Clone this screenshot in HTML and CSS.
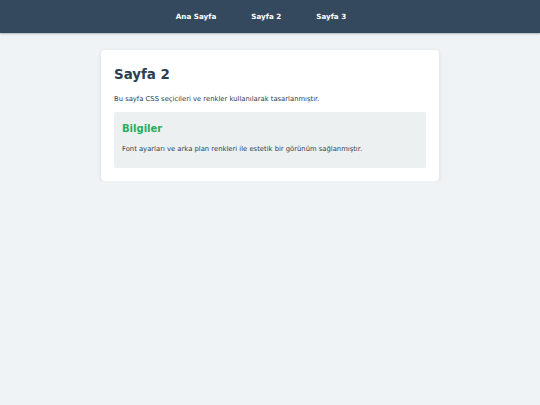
FILE: index.html
```
<!DOCTYPE html>
<html lang="tr">
<head>
<meta charset="utf-8">
<title>Sayfa 2</title>
<link rel="stylesheet" href="styles.css">
</head>
<body>
<nav class="topnav">
  <a class="navlink" href="#">Ana Sayfa</a>
  <a class="navlink" href="#">Sayfa 2</a>
  <a class="navlink" href="#">Sayfa 3</a>
</nav>
<main class="container">
  <h1 class="title">Sayfa 2</h1>
  <p class="text">Bu sayfa CSS seçicileri ve renkler kullanılarak tasarlanmıştır.</p>
  <section class="info">
    <h2 class="info-title">Bilgiler</h2>
    <p class="text">Font ayarları ve arka plan renkleri ile estetik bir görünüm sağlanmıştır.</p>
  </section>
</main>
</body>
</html>
```
FILE: styles.css
```
html, body {
  margin: 0;
  padding: 0;
}
body {
  background: #f0f3f6;
  font-family: "DejaVu Sans", Verdana, sans-serif;
  color: #2c3e50;
  font-size: 6.8px;
}
.topnav {
  background: #34495e;
  height: 33px;
  display: flex;
  justify-content: center;
  align-items: center;
  gap: 35px;
  box-shadow: 0 1px 1.5px rgba(44, 62, 80, 0.35);
  padding-right: 18px;
}
.navlink {
  color: #ffffff;
  text-decoration: none;
  font-weight: bold;
  font-size: 7.2px;
}
.container {
  width: 312px;
  margin: 17px auto 0;
  background: #ffffff;
  border-radius: 4px;
  padding: 17px 13px 13px;
  box-shadow: 0 1px 4px rgba(0, 0, 0, 0.1);
}
.title {
  margin: 0 0 11px;
  font-size: 13.4px;
  line-height: 16px;
  color: #2c3e50;
}
.text {
  margin: 0;
  font-size: 6.8px;
  line-height: 10px;
  color: #2c3e50;
}
.info {
  margin-top: 8px;
  background: #ecf0f1;
  border-radius: 2px;
  padding: 11px 8px 14px;
}
.info-title {
  margin: 0 0 9px;
  font-size: 10px;
  line-height: 12px;
  color: #27ae60;
}
```
